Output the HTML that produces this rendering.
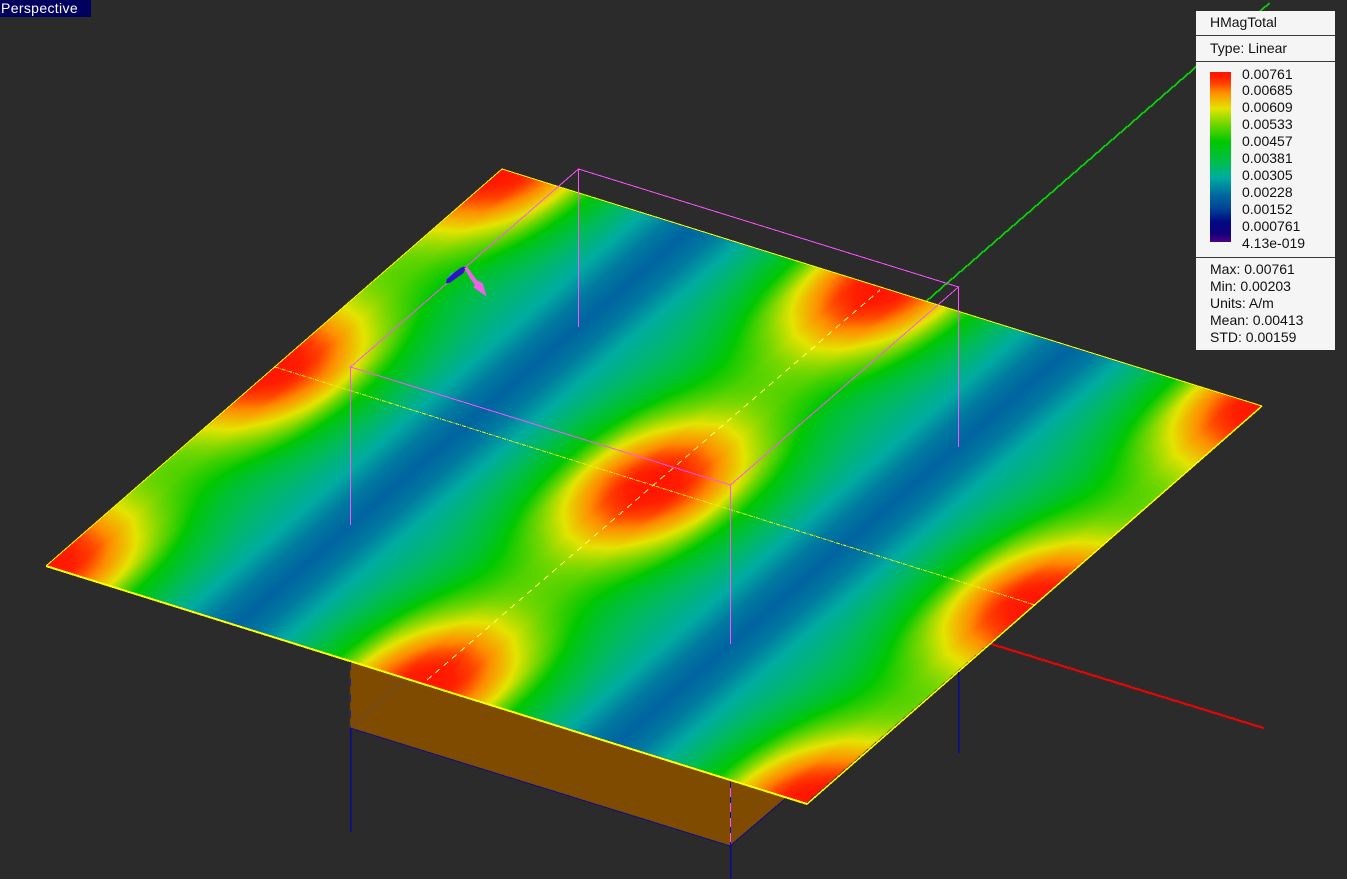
<!DOCTYPE html>
<html><head><meta charset="utf-8">
<style>
html,body{margin:0;padding:0;background:#2b2b2b;width:1347px;height:879px;overflow:hidden}
#wrap{position:relative;width:1347px;height:879px;font-family:"Liberation Sans",sans-serif;color:#111}
canvas,svg{position:absolute;left:0;top:0}
#tab{position:absolute;left:0;top:0;width:91px;height:17px;background:#00005f;color:#fff;font-size:14px;line-height:16px;padding-left:1px;box-sizing:border-box;letter-spacing:.35px;white-space:nowrap}
#panel{position:absolute;left:1196px;top:11px;width:139px;height:339px;background:#f5f5f5}
#panel .t{position:absolute;font-size:14px;line-height:17px;white-space:nowrap}
#panel .s{position:absolute;left:0;width:139px;height:1px;background:#3a3a3a}
#bar{position:absolute;left:14px;top:61px;width:21px;height:170px;background:linear-gradient(to bottom,#ff1400 0%,#ff1e00 3%,#ff4600 7%,#ff8c00 12%,#e4e400 21.5%,#78d700 30%,#00c800 41%,#00be4b 53%,#00aca0 62%,#00649f 73%,#004696 80%,#000a82 88%,#14007d 95%,#4b0087 100%)}
</style></head>
<body><div id="wrap">
<canvas id="c" width="1347" height="879"></canvas>
<svg width="1347" height="879" viewBox="0 0 1347 879" shape-rendering="crispEdges" fill="none">
  <!-- dashed centre lines on plate -->
  <path d="M275 367L1035 605" stroke="#f4f000" stroke-width="1" stroke-dasharray="4 1 1 1"/>
  <path d="M427 680L880 290" stroke="#ffff70" stroke-width="1" stroke-dasharray="6 5"/>
  <!-- plate edges -->
  <path d="M502 169L1262 406" stroke="#ffff00" stroke-width="1"/>
  <path d="M46 566L502 169" stroke="#ffff00" stroke-width="1"/>
  <path d="M1262 406L807 804" stroke="#ffff00" stroke-width="1.5"/>
  <path d="M46 566L807 804" stroke="#ffff00" stroke-width="2"/>
  <!-- pink box -->
  <path d="M578.5 169L958.5 287L730.5 485L350.5 367Z" stroke="#ff50ff" stroke-width="1"/>
  <path d="M578.5 169V327M958.5 287V447M730.5 485V644M350.5 367V525" stroke="#ff50ff" stroke-width="1.2"/>
  <!-- lower structure lines -->
  <path d="M350 728L730 846L785 799" stroke="#0a0a90" stroke-width="1"/>
  <path d="M350 728L404 681" stroke="#6b4a3a" stroke-width="1"/>
  <path d="M350.5 662V728" stroke="#20208a" stroke-width="1" stroke-dasharray="8 8"/>
  <path d="M350.5 728V832M730.5 846V879M958.5 672V753" stroke="#0a0a90" stroke-width="1.5"/>
  <path d="M730.5 782V846" stroke="#ff50ff" stroke-width="1.2"/>
  <path d="M730.5 782V846" stroke="#0000e0" stroke-width="1.2" stroke-dasharray="6 9"/>
  <!-- triad arrows -->
  <g shape-rendering="auto">
    <path d="M445 281.7L451.7 271.7L454 272.7L446.7 280Z" fill="#2fb0a0"/>
    <path d="M463.3 266.7L466 267.3L463.3 273.3L458.3 276.7L450 282.7L446 283.3L446.7 279.3L454 272.7L460 268.3Z" fill="#3010c8"/>
    <path d="M464.3 268.3L467.3 266.7L471.7 273.3L476.7 280L482.7 283.3L486.7 296.7L473.3 287.3L475 285L470 278.3Z" fill="#f060e8"/>
  </g>
</svg>
<div id="tab">Perspective</div>
<div id="panel">
  <div class="t" style="left:14px;top:3px">HMagTotal</div>
  <div class="s" style="top:24px"></div>
  <div class="t" style="left:14px;top:29px">Type: Linear</div>
  <div class="s" style="top:50px"></div>
  <div id="bar"></div>
  <div class="t" style="left:46px;top:55px">0.00761</div>
  <div class="t" style="left:46px;top:71px">0.00685</div>
  <div class="t" style="left:46px;top:88px">0.00609</div>
  <div class="t" style="left:46px;top:105px">0.00533</div>
  <div class="t" style="left:46px;top:122px">0.00457</div>
  <div class="t" style="left:46px;top:139px">0.00381</div>
  <div class="t" style="left:46px;top:156px">0.00305</div>
  <div class="t" style="left:46px;top:173px">0.00228</div>
  <div class="t" style="left:46px;top:190px">0.00152</div>
  <div class="t" style="left:46px;top:207px">0.000761</div>
  <div class="t" style="left:46px;top:224px">4.13e-019</div>
  <div class="s" style="top:246px"></div>
  <div class="t" style="left:14px;top:250px">Max: 0.00761</div>
  <div class="t" style="left:14px;top:267px">Min: 0.00203</div>
  <div class="t" style="left:14px;top:284px">Units: A/m</div>
  <div class="t" style="left:14px;top:301px">Mean: 0.00413</div>
  <div class="t" style="left:14px;top:318px">STD: 0.00159</div>
</div>
</div>
<script>
(function(){
var cv=document.getElementById('c'),g=cv.getContext('2d');
g.fillStyle='#2b2b2b';g.fillRect(0,0,1347,879);
function line(x0,y0,x1,y1,c,sx,sy){
  g.fillStyle=c;
  var dx=x1-x0,dy=y1-y0,n=Math.max(Math.abs(dx),Math.abs(dy));
  for(var i=0;i<=n;i++){
    g.fillRect(Math.round(x0+dx*i/n),Math.round(y0+dy*i/n),sx,sy);
  }
}
// axes
line(925,301,1268,3,'#00ff00',2,1);
line(900,615,1263,727,'#ff0000',1,2);
// brown body
g.fillStyle='#7f4b00';g.beginPath();g.moveTo(350,640);g.lineTo(350,728);g.lineTo(730,846);g.lineTo(800,786);g.lineTo(600,640);g.closePath();g.fill();
// plate field
var T=[502,169],R=[1262,406],L=[46,566];
var ax=R[0]-T[0],ay=R[1]-T[1],bx=L[0]-T[0],by=L[1]-T[1],det=ax*by-ay*bx;
var stops=[[0,75,0,135],[.05,20,0,125],[.12,0,10,130],[.2,0,70,150],[.267,0,100,160],[.38,0,172,160],[.47,0,188,85],[.59,0,200,0],[.7,120,215,0],[.785,228,228,0],[.88,255,140,0],[.93,255,70,0],[.97,255,30,0],[1,255,20,0]];
function col(f){for(var i=1;i<stops.length;i++){if(f<=stops[i][0]){var a=stops[i-1],b=stops[i],t=(f-a[0])/(b[0]-a[0]);return [a[1]+(b[1]-a[1])*t,a[2]+(b[2]-a[2])*t,a[3]+(b[3]-a[3])*t];}}var s=stops[stops.length-1];return [s[1],s[2],s[3]];}
var P1=[[0,1],[.03,.965],[.06,.875],[.083,.785],[.10,.68],[.115,.59],[.15,.47],[.187,.38],[.22,.30],[.25,.267]];
var P2=[[0,.68],[.03,.66],[.065,.6],[.1,.51],[.135,.45],[.187,.38],[.22,.30],[.25,.267]];
function prof(P,d){for(var i=1;i<P.length;i++){if(d<=P[i][0]){var t=(d-P[i-1][0])/(P[i][0]-P[i-1][0]);return P[i-1][1]+(P[i][1]-P[i-1][1])*t;}}return P[P.length-1][1];}
var im=g.getImageData(0,0,1347,879),d=im.data,PI2=Math.PI*2;
for(var y=160;y<810;y++)for(var x=40;x<1270;x++){
  var dx=x+.5-T[0],dy=y+.5-T[1];
  var u=(dx*by-dy*bx)/det,v=(ax*dy-ay*dx)/det;
  if(u<0||u>1||v<0||v>1)continue;
  var du=Math.abs(u-Math.round(u*2)/2);
  var cv2=Math.cos(PI2*v),w=cv2*cv2;
  var a=prof(P1,du),b=prof(P2,du);
  var f=b+(a-b)*w;
  var c=col(f),k=(y*1347+x)*4;
  d[k]=c[0];d[k+1]=c[1];d[k+2]=c[2];d[k+3]=255;
}
g.putImageData(im,0,0);
})();
</script>
</body></html>
